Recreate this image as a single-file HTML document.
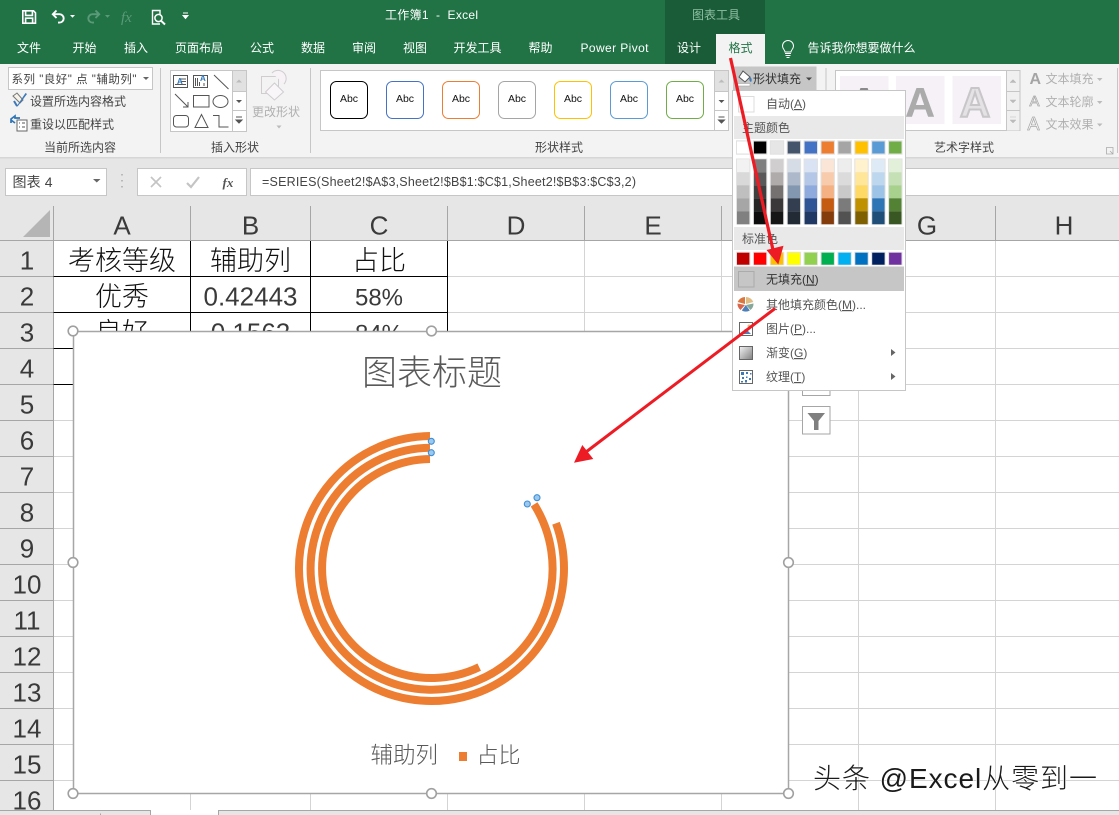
<!DOCTYPE html>
<html lang="zh"><head><meta charset="utf-8"><title>工作簿1 - Excel</title>
<style>
html,body{margin:0;padding:0;background:#fff;width:1119px;height:815px;overflow:hidden}
svg{display:block;position:absolute;left:0;top:0}
text{font-family:"Liberation Sans","Noto Sans CJK SC",sans-serif;white-space:pre}
.t{font-size:12px;fill:#444}
.w{font-size:12px;fill:#fff}
.d{font-size:12px;fill:#b0b0b0}
.c{font-size:27px;fill:#111;font-weight:300;text-anchor:middle}
.n1{font-size:26px;fill:#3a3a3a;text-anchor:middle}
.h{font-size:26px;fill:#3a3a3a;text-anchor:middle}
.m{font-size:12px;fill:#555}
.g{stroke:#d4d4d4;stroke-width:1;fill:none}
.k{stroke:#000;stroke-width:1;fill:none}
.e{stroke:#a6a6a6;stroke-width:1;fill:none}
.p rect{width:12.4px;height:13px}
.sw rect{width:12.4px;height:12px}
.q{fill:#fff;stroke:#a0a0a0;stroke-width:1.6}
.n{fill:#9cc8ec;stroke:#3d8fd9;stroke-width:1.1}
</style></head><body>
<svg width="1119" height="815" viewBox="0 0 1119 815" xmlns="http://www.w3.org/2000/svg">
<rect width="1119" height="815" fill="#fff"/>

<!-- title bar -->
<rect width="1119" height="64" fill="#217346"/>
<rect x="665" width="100" height="64" fill="#1a5c37"/>
<rect x="716" y="34" width="49" height="30" fill="#f3f3f3"/>
<!-- QAT -->
<path d="M22.8 10.8h10.7l2 2v10.4H22.8z M25.6 10.8v4.6h6.8v-4.6 M25.6 23.2v-5h7v5" fill="none" stroke="#fff" stroke-width="1.6"/>
<path d="M56.5 10.5L52.8 14.2L56.5 18M53 14.2h6.5a4.2 4.2 0 0 1 0 8.4h-1.5" fill="none" stroke="#fff" stroke-width="1.9"/>
<path d="M70 15h5l-2.5 2.7z" fill="#fff"/>
<path d="M95.5 10.5L99.2 14.2L95.5 18M99 14.2h-6.5a4.2 4.2 0 0 0 0 8.4h1.5" fill="none" stroke="#5b9a78" stroke-width="1.9"/>
<path d="M105 15h5l-2.5 2.7z" fill="#5b9a78"/>
<text x="121" y="22" style="font-family:'Liberation Serif',serif;font-style:italic;font-size:15px;fill:#5b9a78">fx</text>
<path d="M160 15V10.500H152.500V24H160" fill="none" stroke="#fff" stroke-width="1.4"/>
<circle cx="158.500" cy="18" r="3.600" fill="none" stroke="#fff" stroke-width="1.500"/>
<path d="M161 20.700L165 24.500" stroke="#fff" stroke-width="2"/>
<path d="M183 13h5M183 15.500h5l-2.500 3z" stroke="#fff" stroke-width="1" fill="#fff"/>
<text x="385" y="19" class="w" textLength="93">工作簿1  -  Excel</text>
<text x="692" y="19" style="font-size:12px;fill:#8fbfa4">图表工具</text>

<text x="17" y="52" class="w">文件</text>
<text x="72.500" y="52" class="w">开始</text>
<text x="124" y="52" class="w">插入</text>
<text x="175" y="52" class="w">页面布局</text>
<text x="250" y="52" class="w">公式</text>
<text x="301" y="52" class="w">数据</text>
<text x="352" y="52" class="w">审阅</text>
<text x="403" y="52" class="w">视图</text>
<text x="453.500" y="52" class="w">开发工具</text>
<text x="528.500" y="52" class="w">帮助</text>
<text x="580.500" y="52" class="w" textLength="68">Power Pivot</text>
<text x="677" y="52" class="w">设计</text>
<text x="728.500" y="52" style="font-size:12px;fill:#217346">格式</text>
<path d="M785 53.500h6M785.500 55.500h5M786.500 57.500h3M785 52c0-2-2.500-3-2.500-6a5.500 5.500 0 0 1 11 0c0 3-2.500 4-2.500 6z" fill="none" stroke="#fff" stroke-width="1"/>
<text x="807.500" y="52" class="w">告诉我你想要做什么</text>

<!-- ribbon -->
<rect y="64" width="1119" height="93" fill="#f3f3f3"/>
<rect y="157" width="1119" height="1.500" fill="#d6d6d6"/>
<rect y="158.500" width="1119" height="47.500" fill="#e6e6e6"/>

<rect x="8.500" y="67.500" width="144" height="22" fill="#fff" stroke="#c6c6c6"/>
<text x="11.500" y="83" style="font-size:11.500px;fill:#444" textLength="125">系列 "良好" 点 "辅助列"</text>
<path d="M143 77h6l-3 3z" fill="#666"/>
<path d="M13 96l4-3 6 7-3 3z" fill="#f7f3e8" stroke="#777"/><path d="M27 94l-9 12-1.500 1 1-2 8-12z" fill="#3e79b8"/><path d="M14 101l3 5" stroke="#3e79b8" stroke-width="2"/>
<text x="30" y="105.500" class="t">设置所选内容格式</text>
<path d="M11 123v-4l4-3 0 2h5M11 120l4 3" fill="none" stroke="#2e75b6" stroke-width="1.700"/><rect x="17" y="120" width="10" height="11" fill="#fff" stroke="#666"/><path d="M19 123h1M22 123h3M19 127h1M22 127h3" stroke="#555"/>
<text x="30" y="128.500" class="t">重设以匹配样式</text>
<text x="44" y="151.500" class="t">当前所选内容</text>
<path d="M160.500 68v85" class="g" style="stroke:#c6c6c6"/>

<!-- shape gallery -->
<rect x="170.500" y="70.500" width="76" height="61" fill="#fff" stroke="#c6c6c6"/>
<rect x="232.500" y="71" width="13.500" height="20" fill="#e1e1e1"/>
<path d="M232.500 70.500v61M232.500 91.500h14M232.500 110.500h14" class="g" style="stroke:#c6c6c6"/>
<path d="M236 82.500h6l-3-3z" fill="#bbb"/><path d="M236 100h6l-3 3z" fill="#555"/><path d="M236 117h6M236 120h6l-3 3z" stroke="#555" stroke-width="1" fill="#555"/>
<g fill="none" stroke="#555" stroke-width="1">
<rect x="173.500" y="75.500" width="14" height="12"/><path d="M181 79h5M181 81.500h5M175 84.500h11"/>
<rect x="193.500" y="75.500" width="14" height="12"/><path d="M195.500 78v8M197.500 78v8M199.500 82v4M204 83v3"/>
<path d="M214 75l14.500 14"/>
<path d="M175 94l13 13M188 102v5h-5"/>
<rect x="193.500" y="95.500" width="15.500" height="11.500"/>
<ellipse cx="220.500" cy="101.500" rx="7.500" ry="6"/>
<rect x="173.500" y="115.500" width="15" height="11.500" rx="3"/>
<path d="M201.500 114.500l6.500 13h-13z"/>
<path d="M213 115.500h6v11.500h9.500"/>
</g>
<text x="177" y="84" style="font-size:8px;font-weight:bold;fill:#2e75b6">A</text>
<text x="200" y="81" style="font-size:8px;font-weight:bold;fill:#2e75b6">A</text>
<path d="M261.500 76.500h17v17h-17z" fill="none" stroke="#d0ccd0"/><path d="M272 73a8 8 0 1 1 12 11" fill="#f6f2f6" stroke="#d0ccd0"/><path d="M274.500 83l9 9-9 8-9-8z" fill="#f8f6f8" stroke="#d0ccd0"/>
<text x="252" y="116" class="d">更改形状</text>
<path d="M276.500 125.500h5l-2.500 3z" fill="#bbb"/>
<text x="211" y="151.500" class="t">插入形状</text>
<path d="M310.500 68v85" class="g" style="stroke:#c6c6c6"/>

<!-- style gallery -->
<rect x="320.500" y="70.500" width="408" height="60" fill="#fff" stroke="#c6c6c6"/>
<rect x="715" y="71" width="13" height="20" fill="#e1e1e1"/>
<path d="M714.500 70.500v60M714.500 91.500h14M714.500 110.500h14" class="g" style="stroke:#c6c6c6"/>
<path d="M718.500 82.500h6l-3-3z" fill="#bbb"/><path d="M718.500 100h6l-3 3z" fill="#555"/><path d="M718.500 117h6M718.500 120h6l-3 3z" stroke="#555" stroke-width="1" fill="#555"/>
<g fill="#fff" stroke-width="1">
<rect x="330.500" y="81.500" width="37" height="37" rx="6" stroke="#000"/>
<rect x="386.500" y="81.500" width="37" height="37" rx="6" stroke="#4472c4"/>
<rect x="442.500" y="81.500" width="37" height="37" rx="6" stroke="#ed7d31"/>
<rect x="498.500" y="81.500" width="37" height="37" rx="6" stroke="#a5a5a5"/>
<rect x="554.500" y="81.500" width="37" height="37" rx="6" stroke="#ffc000"/>
<rect x="610.500" y="81.500" width="37" height="37" rx="6" stroke="#5b9bd5"/>
<rect x="666.500" y="81.500" width="37" height="37" rx="6" stroke="#70ad47"/>
</g>
<g style="font-size:10.500px;fill:#111" text-anchor="middle">
<text x="349" y="102">Abc</text><text x="405" y="102">Abc</text><text x="461" y="102">Abc</text><text x="517" y="102">Abc</text><text x="573" y="102">Abc</text><text x="629" y="102">Abc</text><text x="685" y="102">Abc</text>
</g>
<text x="535" y="151.500" class="t">形状样式</text>

<!-- shape fill button -->
<rect x="733" y="66.500" width="83.500" height="24" fill="#c6c6c6"/>
<path d="M743 71l7 6-5 5-6-5z" fill="#fff" stroke="#555"/><path d="M750 77c2 1 2 4 1 5-2-1-2-3-1-5z" fill="#3e79b8"/><rect x="737" y="83.500" width="13" height="2.500" fill="#fff" stroke="#999" stroke-width=".5"/>
<text x="753" y="83" style="font-size:12px;fill:#333">形状填充</text>
<path d="M806 77.500h6l-3 3z" fill="#444"/>
<path d="M826 68v85" class="g" style="stroke:#c6c6c6"/>

<!-- wordart -->
<rect x="835.500" y="70.500" width="184.500" height="60" fill="#fff" stroke="#c6c6c6"/>
<rect x="1006.500" y="71" width="13" height="59.500" fill="#f0f0f0"/>
<path d="M1006.500 70.500v60M1006.500 91.500h14M1006.500 110.500h14" class="g" style="stroke:#c6c6c6"/>
<path d="M1010 82.500h6l-3-3zM1010 100h6l-3 3zM1010 117h6M1010 120h6l-3 3z" stroke="#bbb" stroke-width=".5" fill="#bbb"/>
<rect x="840" y="76" width="48.500" height="48" fill="#f5f1f7"/><rect x="896" y="76" width="48.500" height="48" fill="#f5f1f7"/><rect x="952.500" y="76" width="48.500" height="48" fill="#f5f1f7"/>
<text x="864" y="117" text-anchor="middle" style="font-size:42px;font-weight:bold;fill:#8a8a8a;font-family:'Liberation Sans',sans-serif">A</text>
<text x="920" y="117" text-anchor="middle" style="font-size:42px;font-weight:bold;fill:#ababab;font-family:'Liberation Sans',sans-serif">A</text>
<text x="975" y="117" text-anchor="middle" style="font-size:42px;font-weight:bold;fill:#e4e2e4;stroke:#c8c6c8;stroke-width:2;font-family:'Liberation Sans',sans-serif">A</text>
<text x="1029.500" y="84" style="font-size:16px;font-weight:bold;fill:#a5a5a5">A</text>
<text x="1029.500" y="106" style="font-size:15px;fill:#fff;stroke:#aaa;stroke-width:.8">A</text>
<text x="1027.500" y="130" style="font-size:18px;fill:#fff;stroke:#aaa;stroke-width:.8">A</text>
<text x="1045.500" y="83" class="d">文本填充</text><text x="1045.500" y="106" class="d">文本轮廓</text><text x="1045.500" y="128.500" class="d">文本效果</text>
<path d="M1097 78h5.500l-2.750 3zM1097 101h5.500l-2.750 3zM1097 123.500h5.500l-2.750 3z" fill="#bbb"/>
<text x="934" y="151.500" class="t">艺术字样式</text>
<path d="M1106.500 147.500h6.500v6.500h-6.500zM1110 151l3 3" fill="none" stroke="#aaa" stroke-width=".8"/>
<path d="M1117.500 68v85" class="g" style="stroke:#c6c6c6"/>

<!-- formula bar -->
<rect x="5.500" y="168.500" width="101" height="27" fill="#fff" stroke="#c6c6c6"/>
<text x="12.500" y="187" style="font-size:14px;fill:#444" textLength="40">图表 4</text>
<path d="M93 179h7.500l-3.750 3.500z" fill="#666"/>
<path d="M122 174v1.500M122 180v1.500M122 186v1.500" stroke="#aaa" stroke-width="1.500"/>
<rect x="137.500" y="168.500" width="109" height="27" fill="#fff" stroke="#c6c6c6"/>
<path d="M151 177l10 10M161 177l-10 10" stroke="#c4c4c4" stroke-width="1.700"/>
<path d="M187 183l4 4 8-10" fill="none" stroke="#c4c4c4" stroke-width="2.200"/>
<text x="222.500" y="187" style="font-family:'Liberation Serif',serif;font-style:italic;font-weight:bold;font-size:13px;fill:#555">fx</text>
<rect x="250.500" y="168.500" width="870" height="27" fill="#fff" stroke="#c6c6c6"/>
<text x="262" y="186" style="font-size:12.500px;fill:#444" textLength="374">=SERIES(Sheet2!$A$3,Sheet2!$B$1:$C$1,Sheet2!$B$3:$C$3,2)</text>

<!-- sheet headers -->
<rect y="206" width="1119" height="35" fill="#e6e6e6"/>
<rect y="241" width="53.500" height="570" fill="#e6e6e6"/>
<path d="M50 210v27H23z" fill="#b5b5b5"/>
<path class="e" d="M0 240.500H1119M53.500 206V810M190.500 206V240M310.500 206V240M447.500 206V240M584.500 206V240M721.500 206V240M858.500 206V240M995.500 206V240"/>
<path class="e" d="M0 276.500H53M0 312.500H53M0 348.500H53M0 384.500H53M0 420.500H53M0 456.500H53M0 492.500H53M0 528.500H53M0 564.500H53M0 600.500H53M0 636.500H53M0 672.500H53M0 708.500H53M0 744.500H53M0 780.500H53"/>
<path class="g" d="M54 276.500H1119M54 312.500H1119M54 348.500H1119M54 384.500H1119M54 420.500H1119M54 456.500H1119M54 492.500H1119M54 528.500H1119M54 564.500H1119M54 600.500H1119M54 636.500H1119M54 672.500H1119M54 708.500H1119M54 744.500H1119M54 780.500H1119M190.500 241V810M310.500 241V810M447.500 241V810M584.500 241V810M721.500 241V810M858.500 241V810M995.500 241V810"/>
<path class="k" d="M53.500 276.500H447.500M53.500 312.500H447.500M53.500 348.500H447.500M53.500 384.500H447.500M190.500 241V385M310.500 241V385M447.500 241V385"/>

<text class="h" x="122" y="234.500">A</text><text class="h" x="250.500" y="234.500">B</text><text class="h" x="379" y="234.500">C</text><text class="h" x="516" y="234.500">D</text><text class="h" x="653" y="234.500">E</text><text class="h" x="927" y="234.500">G</text><text class="h" x="1064" y="234.500">H</text>
<text class="h" x="27" y="269.500">1</text><text class="h" x="27" y="305.500">2</text><text class="h" x="27" y="341.500">3</text><text class="h" x="27" y="377.500">4</text><text class="h" x="27" y="413.500">5</text><text class="h" x="27" y="449.500">6</text><text class="h" x="27" y="485.500">7</text><text class="h" x="27" y="521.500">8</text><text class="h" x="27" y="557.500">9</text><text class="h" x="27" y="593.500">10</text><text class="h" x="27" y="629.500">11</text><text class="h" x="27" y="665.500">12</text><text class="h" x="27" y="701.500">13</text><text class="h" x="27" y="737.500">14</text><text class="h" x="27" y="773.500">15</text><text class="h" x="27" y="809.500">16</text>
<text class="c" x="122" y="270">考核等级</text><text class="c" x="250.500" y="270">辅助列</text><text class="c" x="379" y="270">占比</text>
<text class="c" x="122" y="306">优秀</text><text class="n1" x="250.500" y="305.500">0.42443</text><text class="n1" style="font-size:24px" x="379" y="305.500">58%</text>
<text class="c" x="122" y="342">良好</text><text class="n1" x="250.500" y="341.500">0.1562</text><text class="n1" style="font-size:24px" x="379" y="341.500">84%</text>

<!-- bottom bar -->
<rect y="810" width="151" height="5" fill="#e6e6e6"/><rect x="218" y="810" width="901" height="5" fill="#e6e6e6"/>
<path class="e" d="M0 810.500H150.500V815M218.500 815V810.500H1119M100.500 813.500V815"/>

<!-- chart -->
<rect x="73.500" y="331.500" width="715" height="462" fill="#fff" stroke="#a6a6a6" stroke-width="1.500"/>
<text x="432" y="385" text-anchor="middle" style="font-size:35px;fill:#595959;font-weight:300">图表标题</text>
<g fill="none" stroke="#ed7d31" stroke-width="8">
<path d="M430 436A132.500 132.500 0 1 0 556 523.200"/>
<path d="M430 447.700A121 121 0 1 0 534.100 504.400"/>
<path d="M430 459A109.500 109.500 0 1 0 479.200 667.100"/>
</g>
<circle class="n" cx="431.300" cy="441.300" r="3"/><circle class="n" cx="431.300" cy="452.700" r="3"/><circle class="n" cx="537" cy="497.700" r="3"/><circle class="n" cx="527.300" cy="504" r="3"/>
<text x="370.500" y="763" style="font-size:22.500px;fill:#595959;font-weight:300">辅助列</text>
<rect x="459" y="752" width="8" height="9" fill="#ed7d31"/>
<text x="476.500" y="763" style="font-size:22px;fill:#595959;font-weight:300">占比</text>
<circle class="q" cx="73" cy="331" r="4.800"/><circle class="q" cx="431.500" cy="331" r="4.800"/><circle class="q" cx="788.500" cy="331" r="4.800"/><circle class="q" cx="73" cy="562.500" r="4.800"/><circle class="q" cx="788.500" cy="562.500" r="4.800"/><circle class="q" cx="73" cy="793.500" r="4.800"/><circle class="q" cx="431.500" cy="793.500" r="4.800"/><circle class="q" cx="788.500" cy="793.500" r="4.800"/>

<!-- chart side buttons -->
<rect x="802.500" y="360" width="27.500" height="35.500" fill="#fff" stroke="#a6a6a6"/>
<rect x="802.500" y="406.500" width="27.500" height="27.500" fill="#fff" stroke="#a6a6a6"/>
<path d="M807.500 413h17.500l-6.500 8v9h-4.500v-9z" fill="#7f7f7f"/>

<!-- menu -->
<rect x="732.500" y="90.500" width="173" height="300" fill="#fff" stroke="#c6c6c6"/>
<rect x="738.500" y="96.500" width="15.500" height="15.500" fill="#fff" stroke="#dcdcdc"/>
<text x="766" y="108" class="m">自动(<tspan text-decoration="underline">A</tspan>)</text>
<rect x="734" y="116" width="170" height="23" fill="#e9e9e9"/>
<text x="742" y="132" class="m">主题颜色</text>
<g fill="#e2e2e2">
<rect x="736" y="140.300" width="14.400" height="14.400"/><rect x="752.900" y="140.300" width="14.400" height="14.400"/><rect x="769.800" y="140.300" width="14.400" height="14.400"/><rect x="786.700" y="140.300" width="14.400" height="14.400"/><rect x="803.600" y="140.300" width="14.400" height="14.400"/><rect x="820.500" y="140.300" width="14.400" height="14.400"/><rect x="837.400" y="140.300" width="14.400" height="14.400"/><rect x="854.300" y="140.300" width="14.400" height="14.400"/><rect x="871.200" y="140.300" width="14.400" height="14.400"/><rect x="888.100" y="140.300" width="14.400" height="14.400"/>
<rect x="736" y="158.500" width="14.400" height="66"/><rect x="752.900" y="158.500" width="14.400" height="66"/><rect x="769.800" y="158.500" width="14.400" height="66"/><rect x="786.700" y="158.500" width="14.400" height="66"/><rect x="803.600" y="158.500" width="14.400" height="66"/><rect x="820.500" y="158.500" width="14.400" height="66"/><rect x="837.400" y="158.500" width="14.400" height="66"/><rect x="854.300" y="158.500" width="14.400" height="66"/><rect x="871.200" y="158.500" width="14.400" height="66"/><rect x="888.100" y="158.500" width="14.400" height="66"/>
</g>
<g class="sw" transform="translate(737 141.500)"><rect fill="#fff"/><rect x="16.900" fill="#000"/><rect x="33.800" fill="#e7e6e6"/><rect x="50.700" fill="#44546a"/><rect x="67.600" fill="#4472c4"/><rect x="84.500" fill="#ed7d31"/><rect x="101.400" fill="#a5a5a5"/><rect x="118.300" fill="#ffc000"/><rect x="135.200" fill="#5b9bd5"/><rect x="152.100" fill="#70ad47"/></g>
<g class="p" transform="translate(737 159.300)">
<rect fill="#f2f2f2"/><rect y="13" fill="#d9d9d9"/><rect y="26" fill="#bfbfbf"/><rect y="39" fill="#a6a6a6"/><rect y="52" fill="#808080"/>
<rect x="16.900" fill="#7f7f7f"/><rect x="16.900" y="13" fill="#595959"/><rect x="16.900" y="26" fill="#3f3f3f"/><rect x="16.900" y="39" fill="#262626"/><rect x="16.900" y="52" fill="#0d0d0d"/>
<rect x="33.800" fill="#d0cece"/><rect x="33.800" y="13" fill="#afabab"/><rect x="33.800" y="26" fill="#767171"/><rect x="33.800" y="39" fill="#3a3838"/><rect x="33.800" y="52" fill="#171616"/>
<rect x="50.700" fill="#d6dce5"/><rect x="50.700" y="13" fill="#adb9ca"/><rect x="50.700" y="26" fill="#8497b0"/><rect x="50.700" y="39" fill="#333f50"/><rect x="50.700" y="52" fill="#222a35"/>
<rect x="67.600" fill="#dae3f3"/><rect x="67.600" y="13" fill="#b4c7e7"/><rect x="67.600" y="26" fill="#8faadc"/><rect x="67.600" y="39" fill="#2f5597"/><rect x="67.600" y="52" fill="#203864"/>
<rect x="84.500" fill="#fbe5d6"/><rect x="84.500" y="13" fill="#f8cbad"/><rect x="84.500" y="26" fill="#f4b183"/><rect x="84.500" y="39" fill="#c55a11"/><rect x="84.500" y="52" fill="#843c0c"/>
<rect x="101.400" fill="#ededed"/><rect x="101.400" y="13" fill="#dbdbdb"/><rect x="101.400" y="26" fill="#c9c9c9"/><rect x="101.400" y="39" fill="#7b7b7b"/><rect x="101.400" y="52" fill="#525252"/>
<rect x="118.300" fill="#fff2cc"/><rect x="118.300" y="13" fill="#ffe699"/><rect x="118.300" y="26" fill="#ffd966"/><rect x="118.300" y="39" fill="#bf9000"/><rect x="118.300" y="52" fill="#7f6000"/>
<rect x="135.200" fill="#deebf7"/><rect x="135.200" y="13" fill="#bdd7ee"/><rect x="135.200" y="26" fill="#9dc3e6"/><rect x="135.200" y="39" fill="#2e75b6"/><rect x="135.200" y="52" fill="#1f4e79"/>
<rect x="152.100" fill="#e2f0d9"/><rect x="152.100" y="13" fill="#c5e0b4"/><rect x="152.100" y="26" fill="#a9d18e"/><rect x="152.100" y="39" fill="#548235"/><rect x="152.100" y="52" fill="#385723"/>
</g>
<rect x="734" y="227" width="170" height="23" fill="#e9e9e9"/>
<text x="742" y="243" class="m">标准色</text>
<g fill="#e2e2e2"><rect x="736" y="251.800" width="14.400" height="13.400"/><rect x="752.900" y="251.800" width="14.400" height="13.400"/><rect x="769.800" y="251.800" width="14.400" height="13.400"/><rect x="786.700" y="251.800" width="14.400" height="13.400"/><rect x="803.600" y="251.800" width="14.400" height="13.400"/><rect x="820.500" y="251.800" width="14.400" height="13.400"/><rect x="837.400" y="251.800" width="14.400" height="13.400"/><rect x="854.300" y="251.800" width="14.400" height="13.400"/><rect x="871.200" y="251.800" width="14.400" height="13.400"/><rect x="888.100" y="251.800" width="14.400" height="13.400"/></g>
<g class="sw" transform="translate(737 252.700)"><rect fill="#c00000"/><rect x="16.900" fill="#ff0000"/><rect x="33.800" fill="#ffc000"/><rect x="50.700" fill="#ffff00"/><rect x="67.600" fill="#92d050"/><rect x="84.500" fill="#00b050"/><rect x="101.400" fill="#00b0f0"/><rect x="118.300" fill="#0070c0"/><rect x="135.200" fill="#002060"/><rect x="152.100" fill="#7030a0"/></g>
<rect x="734" y="266.500" width="170" height="24.500" fill="#c6c6c6"/>
<rect x="738.500" y="271.500" width="15.500" height="15.500" fill="#c6c6c6" stroke="#ababab"/>
<text x="766" y="283.500" style="font-size:12px;fill:#333">无填充(<tspan text-decoration="underline">N</tspan>)</text>
<path d="M745 297a8 8 0 0 0-7.300 5l7.300 2z" fill="#d9773f"/><path d="M746 297a8 8 0 0 1 7.300 5l-7.300 2z" fill="#e0bd85"/><path d="M753.500 303.500a8 8 0 0 1-3 6.500l-4.500-5z" fill="#86a89b"/><path d="M749.800 310.500a8 8 0 0 1-8 0l4-5.500z" fill="#4f7fb8"/><path d="M737.500 303.500a8 8 0 0 0 3 6.500l4.500-5z" fill="#d9654a"/>
<text x="766" y="309" class="m">其他填充颜色(<tspan text-decoration="underline">M</tspan>)...</text>
<rect x="739.500" y="322.500" width="13" height="13" fill="#fff" stroke="#666"/><path d="M741 334l4-5 3 2 3 3z" fill="#4f7fb8"/><circle cx="749" cy="326" r="1.500" fill="#e0bd85"/>
<text x="766" y="333" class="m">图片(<tspan text-decoration="underline">P</tspan>)...</text>
<defs><linearGradient id="gr" x1="0" y1="0" x2="1" y2="1"><stop offset="0" stop-color="#f4f4f4"/><stop offset="1" stop-color="#808080"/></linearGradient></defs>
<rect x="739.500" y="346.500" width="13" height="13" fill="url(#gr)" stroke="#666"/>
<text x="766" y="357" class="m">渐变(<tspan text-decoration="underline">G</tspan>)</text>
<path d="M891 349l4.500 3.500-4.500 3.500z" fill="#666"/>
<rect x="739.500" y="370.500" width="13" height="13" fill="#fff" stroke="#666"/>
<path d="M741 372h3v3h-3zM746 372h2v2h-2zM750 373h1.500v1.500h-1.500zM742 377h2v2h-2zM746 376.500h1.500v1.500h-1.500zM749 378h2v2h-2zM741 381h2v1.500h-2zM745 380h2v2.500h-2z" fill="#3e79b8"/>
<text x="766" y="381" class="m">纹理(<tspan text-decoration="underline">T</tspan>)</text>
<path d="M891 373l4.500 3.500-4.500 3.500z" fill="#666"/>

<!-- red arrows -->
<path d="M730.500 58L773 250" stroke="#ed1c24" stroke-width="3.200" fill="none"/>
<path d="M778.300 264.500L766.500 250L783.500 245.700z" fill="#ed1c24"/>
<path d="M775 308.500L586 452" stroke="#ed1c24" stroke-width="3" fill="none"/>
<path d="M574 462.700L582.300 445L593.300 459z" fill="#ed1c24"/>

<!-- watermark -->
<text x="813" y="788" textLength="284" style="font-size:28px;fill:#1a1a1a;font-weight:300;stroke:#fff;stroke-width:1.200px;paint-order:stroke">头条 @Excel从零到一</text>
</svg>
</body></html>
